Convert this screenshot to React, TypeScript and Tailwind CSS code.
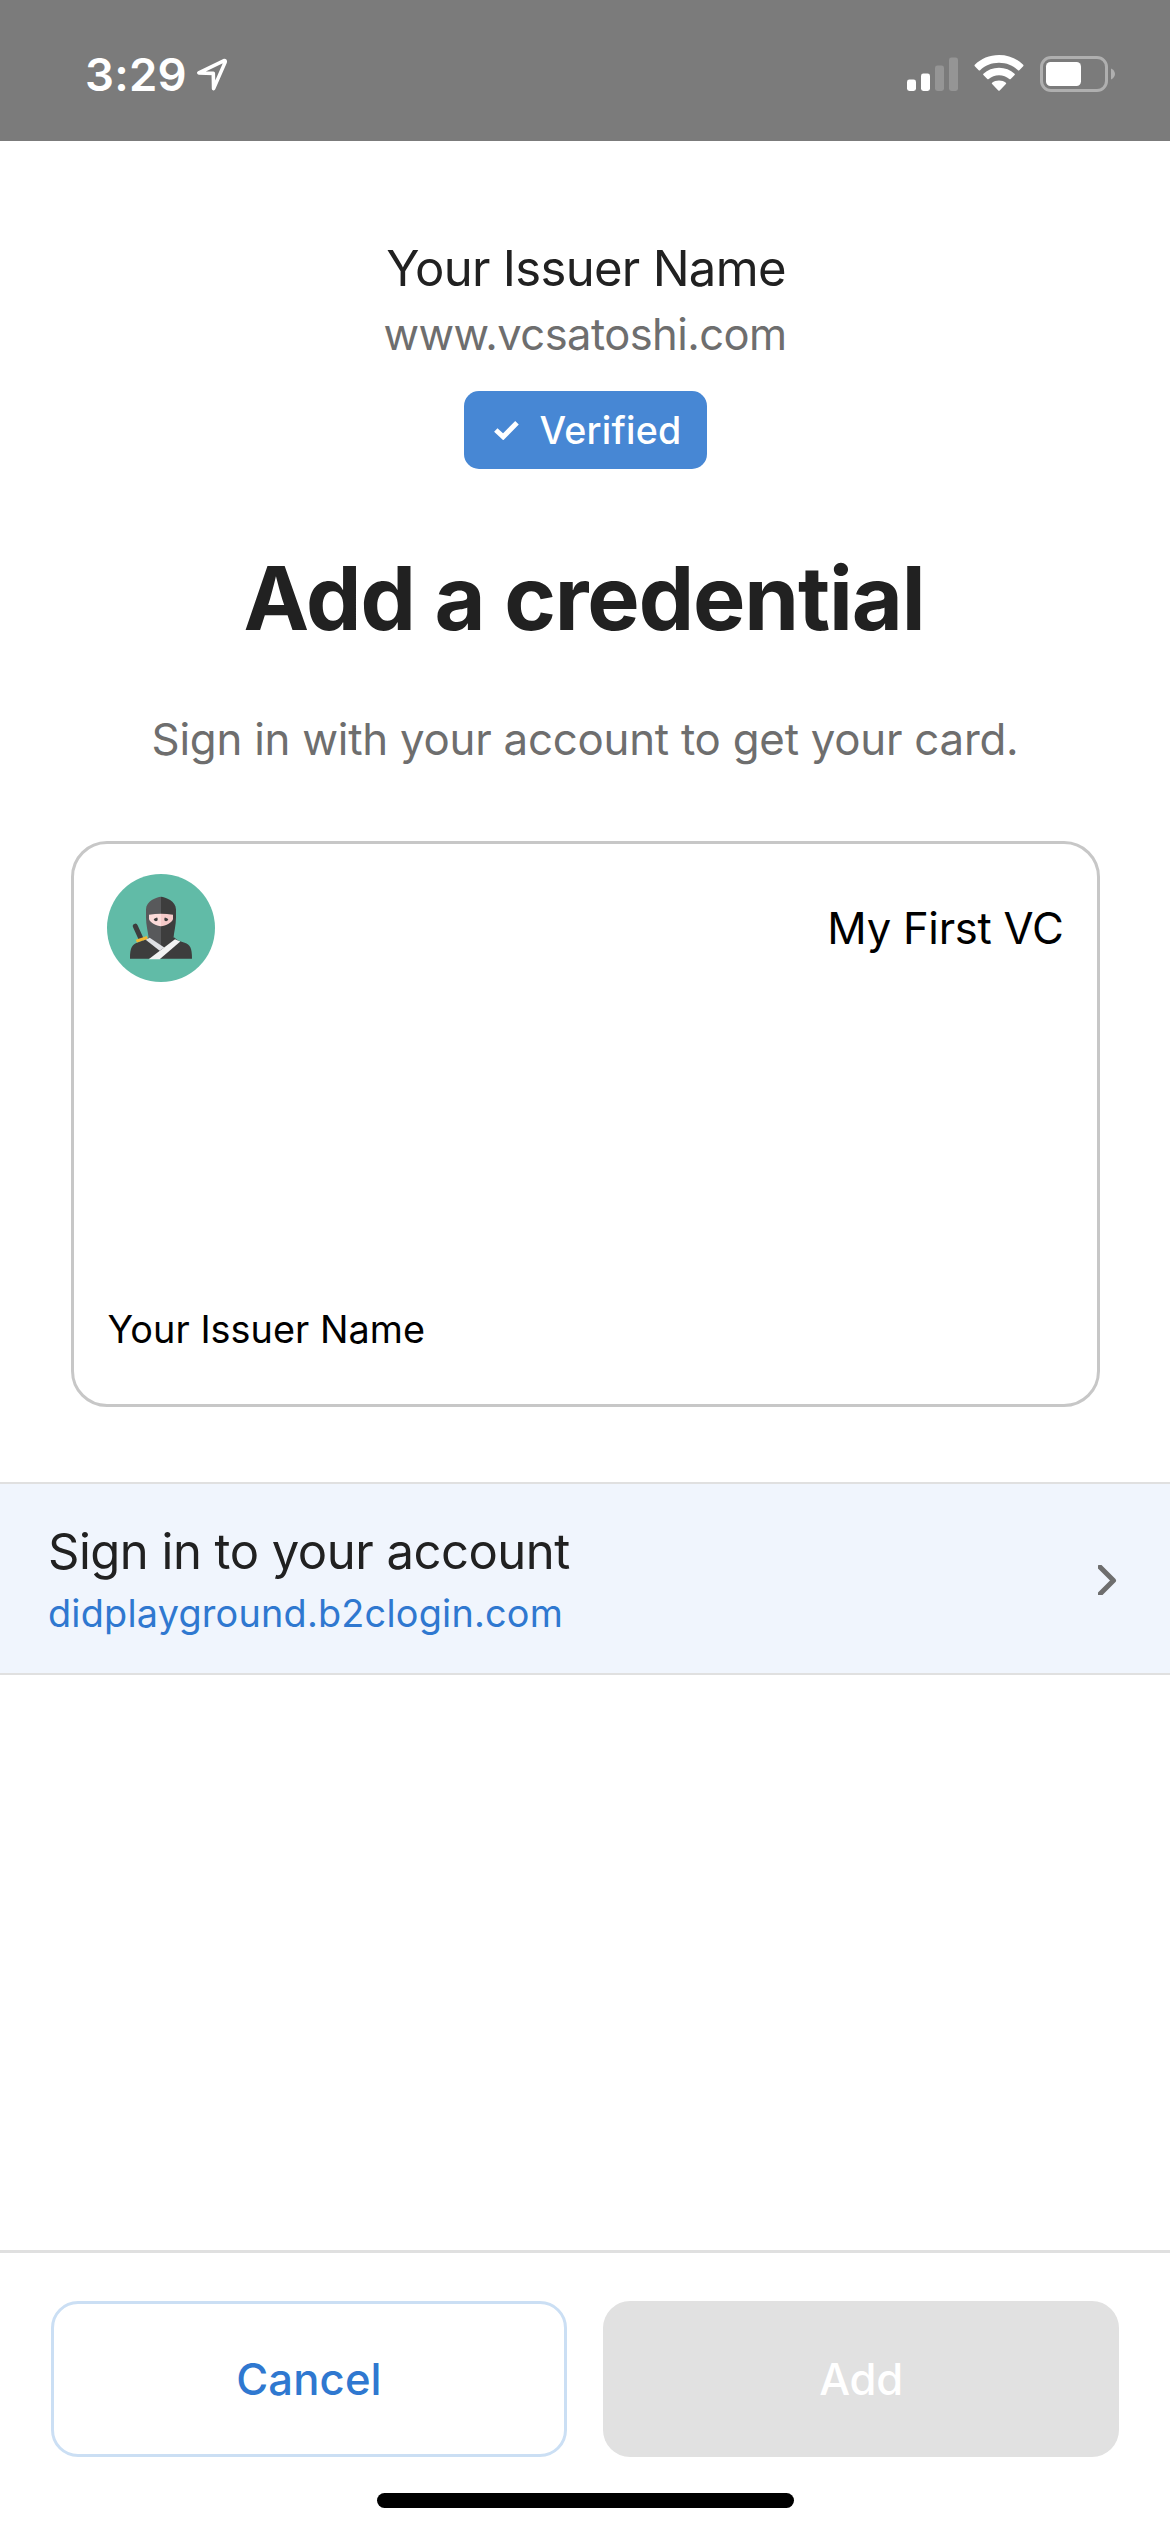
function LocationArrow() {
  return (
    <svg className="ml-[7px] mt-[2px] h-[34px] w-[34px]" viewBox="194 56 34 34" fill="none">
      <path d="M198.8 71.9 L223.6 59.8 Q225.8 59 225.1 61.4 L213.6 87.6 L213.3 72.4 Z" stroke="#fff" strokeWidth="3.6" strokeLinejoin="round" />
    </svg>
  );
}

function Signal() {
  return (
    <svg className="h-[36px] w-[52px]" viewBox="0 0 52 36">
      <rect x="0" y="23.5" width="9" height="11.5" rx="2.4" fill="#fff" />
      <rect x="14" y="17.5" width="9" height="17.5" rx="2.4" fill="#fff" />
      <rect x="28" y="9.5" width="9" height="25.5" rx="2.4" fill="#959595" />
      <rect x="42" y="1.5" width="9" height="33.5" rx="2.4" fill="#959595" />
    </svg>
  );
}

function Wifi() {
  return (
    <svg className="ml-[15px] h-[37px] w-[50px]" viewBox="974 55 50 37" fill="#fff">
      <path d="M999 55 C1008.6 55 1017 58.6 1023.2 64.8 Q1023.8 65.5 1023.2 66.2 L1019.3 70.2 Q1018.6 70.8 1017.9 70.2 C1013 65.5 1006.4 62.8 999 62.8 C991.6 62.8 985 65.5 980.1 70.2 Q979.4 70.8 978.7 70.2 L974.8 66.2 Q974.2 65.5 974.8 64.8 C981 58.6 989.4 55 999 55 Z" />
      <path d="M999 67.7 C1005 67.7 1010.5 69.9 1014.6 73.7 Q1015.3 74.4 1014.6 75.1 L1010.7 79 Q1010 79.6 1009.3 79 C1006.5 76.6 1003 75.2 999 75.2 C995 75.2 991.5 76.6 988.7 79 Q988 79.6 987.3 79 L983.4 75.1 Q982.7 74.4 983.4 73.7 C987.5 69.9 993 67.7 999 67.7 Z" />
      <path d="M999 80.4 C1001.6 80.4 1004.1 81.3 1005.9 82.7 Q1006.6 83.4 1005.9 84.1 L999.7 90.5 Q999 91.2 998.3 90.5 L992.1 84.1 Q991.4 83.4 992.1 82.7 C993.9 81.3 996.4 80.4 999 80.4 Z" />
    </svg>
  );
}

function Battery() {
  return (
    <svg className="ml-[16px] h-[36px] w-[75px]" viewBox="0 0 75 36">
      <rect x="1.5" y="1.5" width="65" height="33" rx="9.5" fill="none" stroke="#afafaf" strokeWidth="3" />
      <rect x="6" y="6" width="35" height="24" rx="4.5" fill="#fff" />
      <path d="M71 12.5 C73.6 13.7 75 15.8 75 18 C75 20.2 73.6 22.3 71 23.5 Z" fill="#afafaf" />
    </svg>
  );
}

function NinjaAvatar() {
  return (
    <svg className="h-[108px] w-[108px]" viewBox="141 131.5 324 324">
      <circle cx="303" cy="293.5" r="162" fill="#61bba7" />
      <path d="M226 288 L243 326" stroke="#3d3d3d" strokeWidth="15" strokeLinecap="round" />
      <path d="M210 386 C210 350 217 343 233 337 C245 333 254 331 266 322 L343 322 C350 330 362 334 374 338 C390 344 396 352 396 386 Z" fill="#3d3d3d" />
      <path d="M229 333 L262 322" stroke="#f2b631" strokeWidth="9" />
      <path d="M303 200 C290 201 258 213 258 238 L258 262 C258 285 264 305 266 323 L303 352 Z" fill="#58595b" />
      <path d="M303 200 C316 201 348 213 348 238 L348 262 C348 285 342 305 340 327 L309 353 L303 352 Z" fill="#3d3d3d" />
      <path d="M267 254 Q285 251 303 251 L303 288 C290 288 267 276 267 266 Z" fill="#fbdbd9" />
      <path d="M339 254 Q321 251 303 251 L303 288 C316 288 339 276 339 266 Z" fill="#f5cac9" />
      <path d="M281 269 Q284 263 288 264 L291 261 Q296 268 292 272 Q286 276 281 269 Z" fill="#3d3d3d" />
      <path d="M325 269 Q322 263 318 264 L315 261 Q310 268 314 272 Q320 276 325 269 Z" fill="#3d3d3d" />
      <path d="M257 329 L269 323 L313 352 L299 362 Z" fill="#dfe1e5" />
      <path d="M345 327 L361 334 L299 387 L266 387 Z" fill="#f2f3f3" />
    </svg>
  );
}

function StatusBar() {
  return (
    <header className="flex h-[141px] shrink-0 bg-[#7b7b7b] pl-[85px] pt-[45px]">
      <div className="flex w-[822px] items-start pt-[1px]">
        <span className="h-[58px] text-[45.5px] font-semibold leading-[58px] tracking-[0.27px] text-white">3:29</span>
        <div className="pt-[9px]">
          <LocationArrow />
        </div>
      </div>
      <div className="flex items-start pt-[11px]">
        <Signal />
        <div className="-mt-px">
          <Wifi />
        </div>
        <Battery />
      </div>
    </header>
  );
}

function IssuerHeader() {
  return (
    <section className="flex flex-col items-center pt-[98px]">
      <div className="ml-[2px] text-[49px] leading-[60px] tracking-[-0.69px] text-[#212121]">Your Issuer Name</div>
      <div className="mt-[5px] text-[43.5px] leading-[60px] tracking-[-0.56px] text-[#6e6e6e]">www.vcsatoshi.com</div>
      <div className="mt-[27px] flex h-[78px] w-[243px] items-center rounded-[15px] bg-[#4787d4] pl-[30px] text-white">
        <svg className="h-[20px] w-[26px]" viewBox="0 0 26 20" fill="none">
          <path d="M1.8 10 L9.2 16.8 L23 2.8" stroke="#fff" strokeWidth="5" />
        </svg>
        <span className="ml-[20px] pt-[1px] text-[37.6px] font-medium leading-[50px] tracking-[0.22px]">Verified</span>
      </div>
      <h1 className="mr-[2px] mt-[79px] text-[88px] font-bold leading-[100px] tracking-[-1.13px] text-[#212121]">Add a credential</h1>
      <p className="mt-[62px] text-[43.8px] leading-[60px] tracking-[-0.24px] text-[#6e6e6e]">
        Sign in with your account to get your card.
      </p>
    </section>
  );
}

function CredentialCard() {
  return (
    <section className="mx-auto mt-[71px] flex h-[566px] w-[1029px] flex-col justify-between rounded-[36px] border-[3px] border-[#c7c7c7] pb-[50px] pl-[33px] pr-[33px] pt-[30px] text-black">
      <div className="flex items-center justify-between">
        <NinjaAvatar />
        <span className="pt-[2px] text-[43.6px] leading-[60px] tracking-[-0.26px]">My First VC</span>
      </div>
      <div className="pl-[1px] text-[37.8px] leading-[50px] tracking-[0.05px]">Your Issuer Name</div>
    </section>
  );
}

function SignInRow() {
  return (
    <a className="mt-[75px] flex h-[193px] items-center justify-between border-y-2 border-[#e0e0e0] bg-[#f0f5fd] pl-[48px] pr-[53px]">
      <div className="mt-[3px]">
        <div className="text-[49px] leading-[60px] tracking-[-0.51px] text-[#212121]">Sign in to your account</div>
        <div className="mt-[6px] text-[37.8px] leading-[50px] tracking-[0.21px] text-[#2f78d0]">didplayground.b2clogin.com</div>
      </div>
      <svg className="mt-[3px] h-[30px] w-[19px]" viewBox="0 0 19 30" fill="none">
        <path d="M2 2 L15.5 15.5 L2 29" stroke="#6e6e6e" strokeWidth="5" strokeLinecap="round" strokeLinejoin="round" />
      </svg>
    </a>
  );
}

function Footer() {
  return (
    <footer className="mt-auto flex h-[282px] flex-col border-t-[3px] border-[#e0e0e0] px-[51px] pt-[48px]">
      <div className="flex gap-9 text-[43.6px] font-medium leading-[60px]">
        <button className="h-[156px] w-[516px] rounded-[27px] border-[3px] border-[#cbdff4] pt-[1px] tracking-[0.13px] text-[#2f78d0]">Cancel</button>
        <button className="h-[156px] w-[516px] rounded-[27px] bg-[#e1e1e1] pt-[1px] tracking-[-0.26px] text-white">Add</button>
      </div>
      <div className="mx-auto mt-9 h-[15px] w-[417px] rounded-full bg-black" />
    </footer>
  );
}

export default function App() {
  return (
    <main className="flex h-[2532px] w-[1170px] flex-col overflow-hidden bg-white font-['Inter',sans-serif]">
      <StatusBar />
      <IssuerHeader />
      <CredentialCard />
      <SignInRow />
      <Footer />
    </main>
  );
}
